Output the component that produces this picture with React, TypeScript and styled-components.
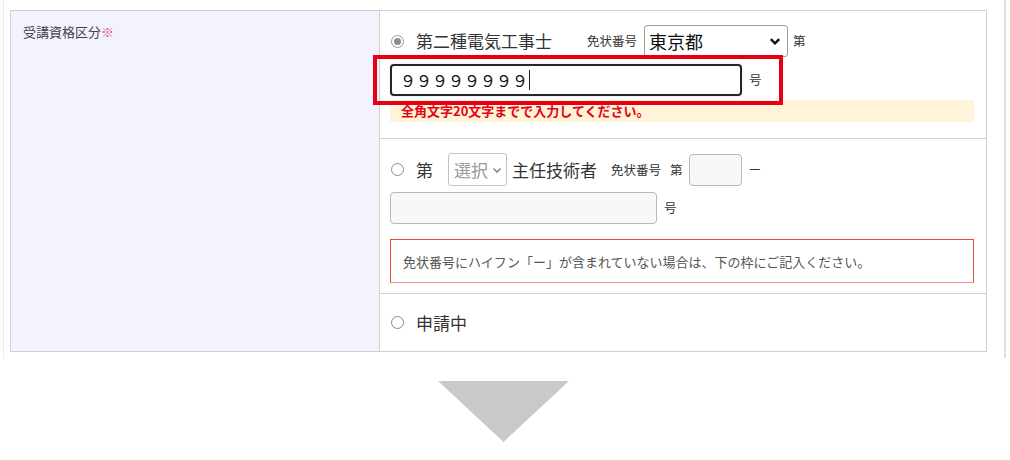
import React from "react";
import styled, { createGlobalStyle } from "styled-components";

const Global = createGlobalStyle`
  html, body { margin: 0; padding: 0; background: #fff; }
  body { font-family: "Noto Sans CJK JP", "Noto Sans", sans-serif; color: #333; }
  * { box-sizing: border-box; }
`;

const Frame = styled.div`
  margin-left: 3px;
  width: 1003px;
  padding: 10px 0 6px 6px;
  border-left: 1px solid #ececec;
  border-right: 2px solid #e2e2e2;
`;

const Table = styled.div`
  width: 977px;
  display: grid;
  grid-template-columns: 369px 1fr;
  border: 1px solid #cfcfcf;
`;

const LabelCell = styled.div`
  background: #f3f3fd;
  border-right: 1px solid #cfcfcf;
  padding: 12px 12px;
  font-size: 13px;
  line-height: 18px;
  color: #444;
`;

const Req = styled.span`
  color: #e8559a;
`;

const ValueCell = styled.div`
  display: flex;
  flex-direction: column;
`;

const Row = styled.div<{ $h: number; $pt: number; $last?: boolean }>`
  position: relative;
  height: ${(p) => p.$h}px;
  padding: ${(p) => p.$pt}px 12px 0 10px;
  border-bottom: ${(p) => (p.$last ? "none" : "1px solid #cfcfcf")};
  display: flex;
  flex-direction: column;
`;

const Line = styled.div<{ $mt?: number }>`
  display: flex;
  align-items: center;
  margin-top: ${(p) => p.$mt ?? 0}px;
`;

const Radio = styled.span<{ $checked?: boolean }>`
  width: 13px;
  height: 13px;
  border-radius: 50%;
  border: 1px solid ${(p) => (p.$checked ? "#9a9a9a" : "#8a8a8a")};
  background: #fff;
  margin: 0 12px 0 1px;
  flex: none;
  display: flex;
  align-items: center;
  justify-content: center;
  &::after {
    content: "";
    display: ${(p) => (p.$checked ? "block" : "none")};
    width: 7px;
    height: 7px;
    border-radius: 50%;
    background: #8c8c8c;
  }
`;

const Big = styled.span<{ $mr?: number }>`
  font-size: 17px;
  line-height: 22px;
  color: #333;
  margin-right: ${(p) => p.$mr ?? 0}px;
  white-space: nowrap;
`;

const Small = styled.span<{ $mr?: number; $ml?: number }>`
  font-size: 12.5px;
  line-height: 18px;
  color: #333;
  margin-right: ${(p) => p.$mr ?? 0}px;
  margin-left: ${(p) => p.$ml ?? 0}px;
  white-space: nowrap;
`;

const SelectBox = styled.div<{ $w: number; $muted?: boolean }>`
  width: ${(p) => p.$w}px;
  height: ${(p) => (p.$muted ? 33 : 32)}px;
  border: 1px solid ${(p) => (p.$muted ? "#c4c4c4" : "#9d9d9d")};
  border-radius: 3px;
  background: #fff;
  display: flex;
  align-items: center;
  justify-content: space-between;
  padding: ${(p) => (p.$muted ? "0 4px 0 5px" : "0 6px 0 4px")};
  font-size: ${(p) => (p.$muted ? 17 : 18)}px;
  color: ${(p) => (p.$muted ? "#9a9a9a" : "#111")};
  flex: none;
  margin-right: 5px;
`;

const TextBox = styled.div<{ $w: number; $focus?: boolean }>`
  width: ${(p) => p.$w}px;
  height: 32px;
  border: ${(p) => (p.$focus ? "2px solid #262626" : "1px solid #b8b8b8")};
  border-radius: 4px;
  background: ${(p) => (p.$focus ? "#fff" : "#f8f8f8")};
  box-shadow: ${(p) => (p.$focus ? "0 0 2px rgba(80,120,200,0.35)" : "none")};
  display: flex;
  align-items: center;
  padding-left: 8px;
  font-size: 16px;
  color: #111;
  flex: none;
  margin-right: 7px;
`;

const Caret = styled.span`
  display: inline-block;
  width: 1px;
  height: 20px;
  background: #222;
  margin-left: 1px;
`;

const Highlight = styled.div`
  position: absolute;
  left: -7px;
  top: 44px;
  width: 410px;
  height: 50px;
  border: 4px solid #e60012;
  pointer-events: none;
`;

const ErrorBand = styled.div`
  margin-top: 4px;
  height: 22px;
  background: #fff3d9;
  color: #e60012;
  font-weight: bold;
  font-size: 13px;
  line-height: 22px;
  padding-left: 11px;
`;

const Notice = styled.div`
  margin-top: 15px;
  height: 44px;
  border: 1px solid #ec4a33;
  border-bottom-color: #f0958a;
  padding-left: 12px;
  display: flex;
  align-items: center;
  font-size: 13px;
  color: #555;
`;

const Center = styled.div`
  display: flex;
  align-items: center;
  height: 100%;
`;

const ArrowWrap = styled.div`
  padding: 23px 0 0 438px;
`;

const Chevron = ({ color, size, weight }: { color: string; size: number; weight: number }) => (
  <svg width={size} height={size} viewBox="0 0 10 10">
    <polyline points="1.5,3.5 5,7 8.5,3.5" fill="none" stroke={color} strokeWidth={weight} />
  </svg>
);

export default function App() {
  return (
    <>
      <Global />
      <Frame>
        <Table>
          <LabelCell>
            受講資格区分<Req>※</Req>
          </LabelCell>
          <ValueCell>
            <Row $h={128} $pt={14}>
              <Line>
                <Radio $checked />
                <Big $mr={35}>第二種電気工事士</Big>
                <Small $mr={7}>免状番号</Small>
                <SelectBox $w={144}>
                  <span>東京都</span>
                  <Chevron color="#111" size={12} weight={2} />
                </SelectBox>
                <Small>第</Small>
              </Line>
              <Line $mt={7}>
                <TextBox $w={352} $focus>
                  <span>９９９９９９９９</span>
                  <Caret />
                </TextBox>
                <Small>号</Small>
              </Line>
              <ErrorBand>全角文字20文字までで入力してください。</ErrorBand>
              <Highlight />
            </Row>
            <Row $h={155} $pt={14}>
              <Line>
                <Radio />
                <Big $mr={15}>第</Big>
                <SelectBox $w={59} $muted>
                  <span>選択</span>
                  <Chevron color="#888" size={10} weight={1.6} />
                </SelectBox>
                <Big $mr={14}>主任技術者</Big>
                <Small $mr={9}>免状番号</Small>
                <Small $mr={6}>第</Small>
                <TextBox $w={53} />
                <Small>ー</Small>
              </Line>
              <Line $mt={6}>
                <TextBox $w={267} />
                <Small>号</Small>
              </Line>
              <Notice>免状番号にハイフン「ー」が含まれていない場合は、下の枠にご記入ください。</Notice>
            </Row>
            <Row $h={57} $pt={0} $last>
              <Center>
                <Radio />
                <Big>申請中</Big>
              </Center>
            </Row>
          </ValueCell>
        </Table>
      </Frame>
      <ArrowWrap>
        <svg width="131" height="61" viewBox="0 0 131 61">
          <polygon points="0,0 131,0 65.5,61" fill="#c9c9c9" />
        </svg>
      </ArrowWrap>
    </>
  );
}
